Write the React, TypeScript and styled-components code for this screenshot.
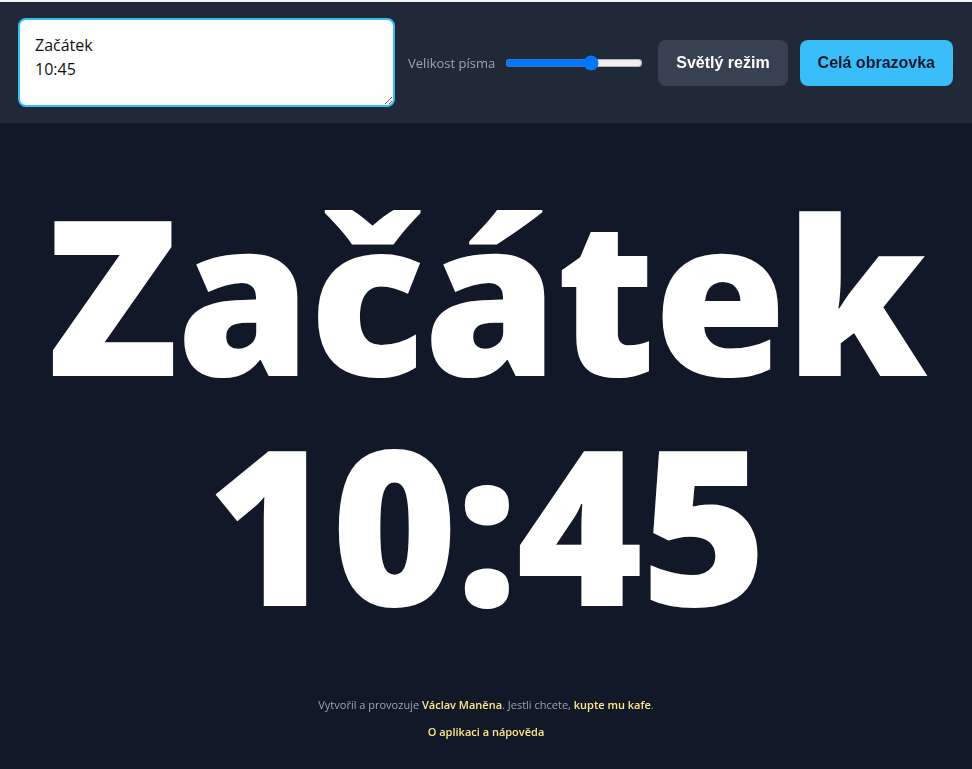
import styled, { createGlobalStyle } from "styled-components";
import { useState } from "react";

const GlobalStyle = createGlobalStyle`
  html, body, #root {
    margin: 0;
    height: 100%;
  }
  body {
    background: #111827;
    border-top: 2px solid #f3f4f6;
    box-sizing: border-box;
    font-family: "Open Sans", "Noto Sans", sans-serif;
  }
`;

const Page = styled.div`
  min-height: calc(100vh - 2px);
  display: flex;
  flex-direction: column;
  background: #111827;
  color: #fff;
`;

const Toolbar = styled.header`
  display: flex;
  align-items: center;
  gap: 12px;
  padding: 16px 19px 16px 18px;
  background: #1f2937;
`;

const Input = styled.textarea`
  flex: 1;
  height: 89px;
  box-sizing: border-box;
  padding: 13px 15px;
  border: 2px solid #38bdf8;
  border-radius: 8px;
  outline: none;
  background: #fff;
  color: #111;
  font-family: "Open Sans", "Noto Sans", sans-serif;
  font-size: 16px;
  line-height: 24px;
  resize: vertical;
`;

const SizeControl = styled.label`
  display: flex;
  align-items: center;
  gap: 10px;
  margin-left: 1px;
  margin-right: 3px;
  color: #9ca3af;
  font-family: "Open Sans", "Noto Sans", sans-serif;
  font-size: 13px;
`;

const Range = styled.input`
  width: 138px;
  margin: 0;
`;

const Button = styled.button<{ $primary?: boolean }>`
  height: 46px;
  padding: 0 18px;
  border: none;
  border-radius: 8px;
  background: ${(p) => (p.$primary ? "#38bdf8" : "#374151")};
  color: ${(p) => (p.$primary ? "#0f172a" : "#fff")};
  font-family: "Liberation Sans", Arial, sans-serif;
  font-weight: 700;
  font-size: 16px;
  cursor: pointer;
`;

const Stage = styled.main`
  flex: 1;
  display: flex;
  align-items: center;
  justify-content: center;
  padding-bottom: 6px;
`;

const Big = styled.div`
  text-align: center;
  font-family: "Open Sans", "Noto Sans", sans-serif;
  font-weight: 800;
  font-size: 216px;
  line-height: 230px;
  letter-spacing: -2px;
  white-space: pre-line;
`;

const Footer = styled.footer`
  display: flex;
  flex-direction: column;
  align-items: center;
  gap: 12px;
  padding: 0 0 30px;
  font-family: "Open Sans", "Noto Sans", sans-serif;
  font-size: 11px;
  color: #9ca3af;
`;

const Link = styled.a`
  color: #fde68a;
  font-weight: 600;
  text-decoration: none;
`;

export default function App() {
  const [text, setText] = useState("Začátek\n10:45");
  const [size, setSize] = useState(64);

  return (
    <Page>
      <GlobalStyle />
      <Toolbar>
        <Input
          value={text}
          autoFocus
          onFocus={(e) => {
            const l = e.target.value.length;
            e.target.setSelectionRange(l, l);
          }}
          onChange={(e) => setText(e.target.value)}
        />
        <SizeControl>
          Velikost písma
          <Range
            type="range"
            min={0}
            max={100}
            value={size}
            onChange={(e) => setSize(Number(e.target.value))}
          />
        </SizeControl>
        <Button>Světlý režim</Button>
        <Button $primary>Celá obrazovka</Button>
      </Toolbar>
      <Stage>
        <Big>{text}</Big>
      </Stage>
      <Footer>
        <div>
          Vytvořil a provozuje <Link href="#">Václav Maněna</Link>. Jestli chcete,{" "}
          <Link href="#">kupte mu kafe</Link>.
        </div>
        <Link href="#">O aplikaci a nápověda</Link>
      </Footer>
    </Page>
  );
}
